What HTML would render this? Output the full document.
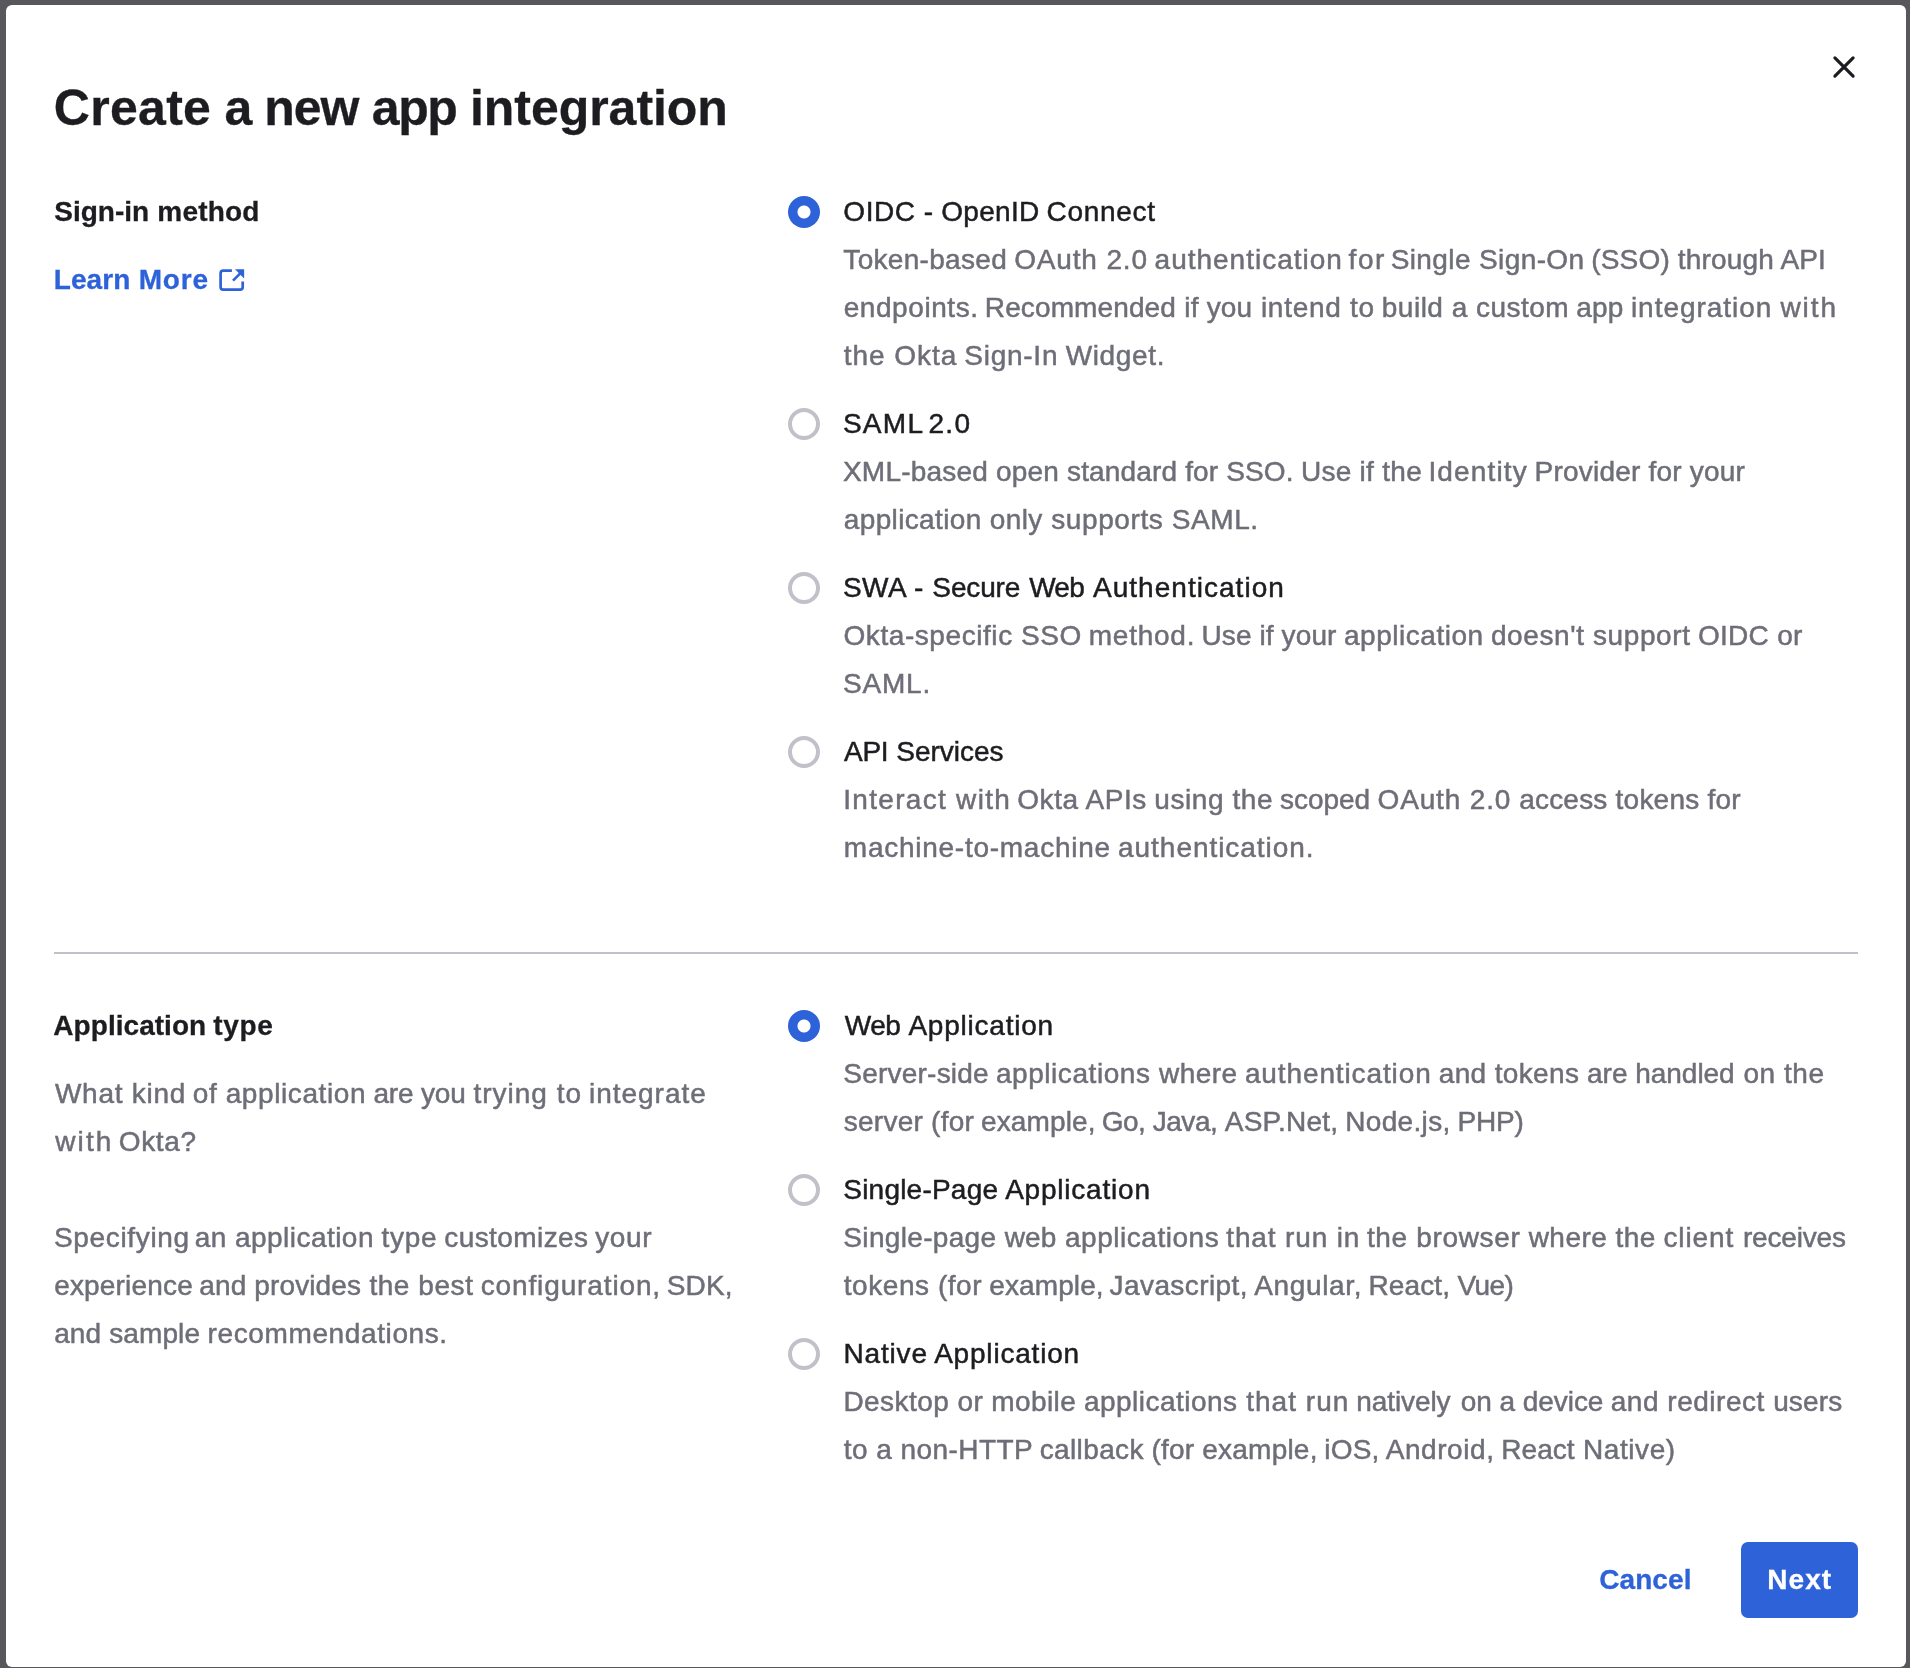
<!DOCTYPE html>
<html lang="en">
<head>
<meta charset="utf-8">
<title>Create a new app integration</title>
<style>
html,body{margin:0;padding:0;}
body{width:1910px;height:1668px;overflow:hidden;background:#58585c;font-family:"Liberation Sans",sans-serif;position:relative;}
.dlg{position:absolute;left:6px;top:5px;width:1900px;height:1662px;background:#fff;border-radius:6px;}
.txt{position:absolute;left:0;top:0;width:1910px;height:1668px;will-change:transform;}
.t{position:absolute;white-space:pre;line-height:48px;height:48px;font-size:28px;margin:0;font-weight:normal;-webkit-text-stroke:0.5px currentColor;}
.b{font-weight:bold;-webkit-text-stroke:0.3px currentColor;}
.d{color:#1d1d21;}
.g{color:#6e6e78;}
.l{color:#2e62d9;}
.w{color:#fff;}
.rad{position:absolute;left:788px;width:32px;height:32px;border-radius:50%;box-sizing:border-box;border:4px solid #c1c1c9;background:#fff;}
.rad.on{border:none;background:radial-gradient(circle at 50% 50%,#fff 0,#fff 6.0px,#2e62d9 7.0px,#2e62d9 100%);}
.hr{position:absolute;left:54px;top:952px;width:1804px;height:2px;background:#c1c1c9;}
.btn{position:absolute;left:1741px;top:1542px;width:117px;height:76px;border-radius:7px;background:#2e62d9;}
svg{position:absolute;overflow:visible;}
</style>
</head>
<body>
<div class="dlg"></div>
<div class="hr"></div>
<div class="btn"></div>
<div class="rad on" style="top:196px"></div>
<div class="rad" style="top:408px"></div>
<div class="rad" style="top:572px"></div>
<div class="rad" style="top:736px"></div>
<div class="rad on" style="top:1010px"></div>
<div class="rad" style="top:1174px"></div>
<div class="rad" style="top:1338px"></div>
<svg style="left:1824px;top:47px" width="40" height="40" viewBox="0 0 40 40"><path d="M10.9 10.9 L29.1 29.1 M29.1 10.9 L10.9 29.1" stroke="#1d1d21" stroke-width="3.2" stroke-linecap="round" fill="none"/></svg>
<svg style="left:210px;top:260px" width="46" height="40" viewBox="0 0 46 40"><path d="M21.9 10.65 H13.2 a2.6 2.6 0 0 0 -2.6 2.6 V27 a2.6 2.6 0 0 0 2.6 2.6 H30.1 a2.6 2.6 0 0 0 2.6 -2.6 V21.4" stroke="#2e62d9" stroke-width="2.7" fill="none"/><path d="M23 20.6 L31 12.6" stroke="#2e62d9" stroke-width="2.7" fill="none"/><path d="M25 9.3 H34.1 V18.4 Z" fill="#2e62d9"/></svg>
<div class="txt">
<h1 class="t b d" style="left:53.86px;top:76.17px;letter-spacing:0.273px;font-size:50px;line-height:64px;height:64px;">Create</h1>
<h1 class="t b d" style="left:224.58px;top:76.17px;letter-spacing:-1.016px;font-size:50px;line-height:64px;height:64px;">a new</h1>
<h1 class="t b d" style="left:371.87px;top:76.17px;letter-spacing:-1.457px;font-size:50px;line-height:64px;height:64px;">app</h1>
<h1 class="t b d" style="left:469.91px;top:76.17px;letter-spacing:-0.032px;font-size:50px;line-height:64px;height:64px;">integration</h1>
<div class="t b d" style="left:54.24px;top:187.80px;letter-spacing:0.016px;">Sign-in</div>
<div class="t b d" style="left:157.35px;top:187.80px;letter-spacing:0.175px;">method</div>
<div class="t b l" style="left:53.81px;top:255.80px;letter-spacing:0.068px;">Learn</div>
<div class="t b l" style="left:138.66px;top:255.80px;letter-spacing:0.835px;">More</div>
<div class="t d" style="left:843.35px;top:187.80px;letter-spacing:0.525px;">OIDC -</div>
<div class="t d" style="left:941.20px;top:187.80px;letter-spacing:0.308px;">OpenID</div>
<div class="t d" style="left:1046.55px;top:187.80px;letter-spacing:0.704px;">Connect</div>
<div class="t g" style="left:843.37px;top:235.80px;letter-spacing:0.302px;">Token-based</div>
<div class="t g" style="left:1014.20px;top:235.80px;letter-spacing:0.842px;">OAuth 2.0</div>
<div class="t g" style="left:1154.59px;top:235.80px;letter-spacing:0.991px;">authentication</div>
<div class="t g" style="left:1348.59px;top:235.80px;letter-spacing:1.518px;">for</div>
<div class="t g" style="left:1390.70px;top:235.80px;letter-spacing:0.391px;">Single Sign-On</div>
<div class="t g" style="left:1591.29px;top:235.80px;letter-spacing:0.170px;">(SSO) through API</div>
<div class="t g" style="left:843.70px;top:283.80px;letter-spacing:0.567px;">endpoints.</div>
<div class="t g" style="left:984.83px;top:283.80px;letter-spacing:0.113px;">Recommended</div>
<div class="t g" style="left:1184.36px;top:283.80px;letter-spacing:0.179px;">if you</div>
<div class="t g" style="left:1260.93px;top:283.80px;letter-spacing:0.712px;">intend to</div>
<div class="t g" style="left:1381.82px;top:283.80px;letter-spacing:0.486px;">build a custom</div>
<div class="t g" style="left:1576.13px;top:283.80px;letter-spacing:0.187px;">app</div>
<div class="t g" style="left:1630.93px;top:283.80px;letter-spacing:0.974px;">integration</div>
<div class="t g" style="left:1780.50px;top:283.80px;letter-spacing:1.897px;">with</div>
<div class="t g" style="left:843.80px;top:331.80px;letter-spacing:0.941px;">the Okta</div>
<div class="t g" style="left:964.36px;top:331.80px;letter-spacing:0.730px;">Sign-In</div>
<div class="t g" style="left:1065.65px;top:331.80px;letter-spacing:0.663px;">Widget.</div>
<div class="t d" style="left:842.91px;top:399.80px;letter-spacing:1.289px;">SAML</div>
<div class="t d" style="left:928.38px;top:399.80px;letter-spacing:1.329px;">2.0</div>
<div class="t g" style="left:843.00px;top:447.80px;letter-spacing:0.198px;">XML-based open</div>
<div class="t g" style="left:1067.04px;top:447.80px;letter-spacing:0.151px;">standard for SSO.</div>
<div class="t g" style="left:1300.91px;top:447.80px;letter-spacing:0.281px;">Use if the</div>
<div class="t g" style="left:1428.45px;top:447.80px;letter-spacing:1.155px;">Identity</div>
<div class="t g" style="left:1534.53px;top:447.80px;letter-spacing:0.216px;">Provider for your</div>
<div class="t g" style="left:843.75px;top:495.80px;letter-spacing:0.369px;">application only</div>
<div class="t g" style="left:1051.28px;top:495.80px;letter-spacing:0.591px;">supports SAML.</div>
<div class="t d" style="left:842.91px;top:563.80px;letter-spacing:0.520px;">SWA -</div>
<div class="t d" style="left:932.36px;top:563.80px;letter-spacing:-0.148px;">Secure</div>
<div class="t d" style="left:1029.13px;top:563.80px;letter-spacing:-0.683px;">Web</div>
<div class="t d" style="left:1093.01px;top:563.80px;letter-spacing:1.026px;">Authentication</div>
<div class="t g" style="left:843.53px;top:611.80px;letter-spacing:0.566px;">Okta-specific SSO</div>
<div class="t g" style="left:1088.76px;top:611.80px;letter-spacing:0.748px;">method.</div>
<div class="t g" style="left:1201.44px;top:611.80px;letter-spacing:0.114px;">Use if your</div>
<div class="t g" style="left:1344.00px;top:611.80px;letter-spacing:0.524px;">application</div>
<div class="t g" style="left:1490.94px;top:611.80px;letter-spacing:0.604px;">doesn&#39;t support</div>
<div class="t g" style="left:1697.89px;top:611.80px;letter-spacing:0.305px;">OIDC or</div>
<div class="t g" style="left:842.91px;top:659.80px;letter-spacing:0.832px;">SAML.</div>
<div class="t d" style="left:843.96px;top:727.80px;letter-spacing:-0.240px;">API</div>
<div class="t d" style="left:896.28px;top:727.80px;letter-spacing:-0.015px;">Services</div>
<div class="t g" style="left:843.22px;top:775.80px;letter-spacing:1.304px;">Interact with</div>
<div class="t g" style="left:1017.27px;top:775.80px;letter-spacing:0.571px;">Okta APIs</div>
<div class="t g" style="left:1154.30px;top:775.80px;letter-spacing:0.572px;">using the</div>
<div class="t g" style="left:1280.04px;top:775.80px;letter-spacing:-0.031px;">scoped</div>
<div class="t g" style="left:1377.53px;top:775.80px;letter-spacing:0.855px;">OAuth 2.0</div>
<div class="t g" style="left:1519.13px;top:775.80px;letter-spacing:0.220px;">access tokens for</div>
<div class="t g" style="left:843.86px;top:823.80px;letter-spacing:0.735px;">machine-to-machine</div>
<div class="t g" style="left:1118.07px;top:823.80px;letter-spacing:0.956px;">authentication.</div>
<div class="t b d" style="left:53.35px;top:1001.80px;letter-spacing:0.040px;">Application</div>
<div class="t b d" style="left:213.34px;top:1001.80px;letter-spacing:0.613px;">type</div>
<div class="t g" style="left:54.91px;top:1069.80px;letter-spacing:0.745px;">What kind</div>
<div class="t g" style="left:192.71px;top:1069.80px;letter-spacing:0.602px;">of application</div>
<div class="t g" style="left:373.43px;top:1069.80px;letter-spacing:-0.181px;">are you</div>
<div class="t g" style="left:473.38px;top:1069.80px;letter-spacing:1.006px;">trying to</div>
<div class="t g" style="left:588.93px;top:1069.80px;letter-spacing:0.988px;">integrate</div>
<div class="t g" style="left:55.26px;top:1117.80px;letter-spacing:2.125px;">with</div>
<div class="t g" style="left:118.72px;top:1117.80px;letter-spacing:0.651px;">Okta?</div>
<div class="t g" style="left:53.91px;top:1213.80px;letter-spacing:0.678px;">Specifying</div>
<div class="t g" style="left:194.75px;top:1213.80px;letter-spacing:0.454px;">an application</div>
<div class="t g" style="left:381.51px;top:1213.80px;letter-spacing:0.749px;">type</div>
<div class="t g" style="left:444.29px;top:1213.80px;letter-spacing:0.411px;">customizes</div>
<div class="t g" style="left:595.14px;top:1213.80px;letter-spacing:0.634px;">your</div>
<div class="t g" style="left:54.13px;top:1261.80px;letter-spacing:0.179px;">experience</div>
<div class="t g" style="left:199.32px;top:1261.80px;letter-spacing:0.125px;">and provides</div>
<div class="t g" style="left:369.38px;top:1261.80px;letter-spacing:0.566px;">the best</div>
<div class="t g" style="left:480.69px;top:1261.80px;letter-spacing:0.873px;">configuration,</div>
<div class="t g" style="left:666.70px;top:1261.80px;letter-spacing:0.202px;">SDK,</div>
<div class="t g" style="left:54.13px;top:1309.80px;letter-spacing:0.126px;">and sample</div>
<div class="t g" style="left:207.60px;top:1309.80px;letter-spacing:0.615px;">recommendations.</div>
<div class="t d" style="left:844.69px;top:1001.80px;letter-spacing:-0.463px;">Web</div>
<div class="t d" style="left:908.43px;top:1001.80px;letter-spacing:0.770px;">Application</div>
<div class="t g" style="left:843.36px;top:1049.80px;letter-spacing:0.215px;">Server-side</div>
<div class="t g" style="left:995.94px;top:1049.80px;letter-spacing:0.554px;">applications</div>
<div class="t g" style="left:1159.04px;top:1049.80px;letter-spacing:0.433px;">where</div>
<div class="t g" style="left:1244.91px;top:1049.80px;letter-spacing:0.883px;">authentication</div>
<div class="t g" style="left:1438.75px;top:1049.80px;letter-spacing:0.354px;">and tokens</div>
<div class="t g" style="left:1587.07px;top:1049.80px;letter-spacing:-0.027px;">are handled</div>
<div class="t g" style="left:1743.40px;top:1049.80px;letter-spacing:0.554px;">on the</div>
<div class="t g" style="left:843.78px;top:1097.80px;letter-spacing:0.251px;">server (for</div>
<div class="t g" style="left:981.06px;top:1097.80px;letter-spacing:0.109px;">example,</div>
<div class="t g" style="left:1101.64px;top:1097.80px;letter-spacing:-0.456px;">Go, Java,</div>
<div class="t g" style="left:1224.80px;top:1097.80px;letter-spacing:0.238px;">ASP.Net,</div>
<div class="t g" style="left:1345.29px;top:1097.80px;letter-spacing:0.324px;">Node.js,</div>
<div class="t g" style="left:1457.53px;top:1097.80px;letter-spacing:-0.172px;">PHP)</div>
<div class="t d" style="left:843.28px;top:1165.80px;letter-spacing:0.219px;">Single-Page</div>
<div class="t d" style="left:1005.14px;top:1165.80px;letter-spacing:0.785px;">Application</div>
<div class="t g" style="left:843.36px;top:1213.80px;letter-spacing:0.323px;">Single-page</div>
<div class="t g" style="left:1004.74px;top:1213.80px;letter-spacing:0.112px;">web</div>
<div class="t g" style="left:1065.00px;top:1213.80px;letter-spacing:0.527px;">applications</div>
<div class="t g" style="left:1226.30px;top:1213.80px;letter-spacing:0.860px;">that run in</div>
<div class="t g" style="left:1366.88px;top:1213.80px;letter-spacing:0.659px;">the browser</div>
<div class="t g" style="left:1528.70px;top:1213.80px;letter-spacing:0.453px;">where the</div>
<div class="t g" style="left:1663.39px;top:1213.80px;letter-spacing:0.930px;">client</div>
<div class="t g" style="left:1742.91px;top:1213.80px;letter-spacing:-0.175px;">receives</div>
<div class="t g" style="left:843.80px;top:1261.80px;letter-spacing:0.545px;">tokens (for</div>
<div class="t g" style="left:989.28px;top:1261.80px;letter-spacing:0.108px;">example,</div>
<div class="t g" style="left:1109.62px;top:1261.80px;letter-spacing:0.400px;">Javascript,</div>
<div class="t g" style="left:1254.22px;top:1261.80px;letter-spacing:0.651px;">Angular,</div>
<div class="t g" style="left:1368.42px;top:1261.80px;letter-spacing:0.127px;">React,</div>
<div class="t g" style="left:1457.47px;top:1261.80px;letter-spacing:-0.589px;">Vue)</div>
<div class="t d" style="left:843.38px;top:1329.80px;letter-spacing:0.855px;">Native</div>
<div class="t d" style="left:934.14px;top:1329.80px;letter-spacing:0.804px;">Application</div>
<div class="t g" style="left:843.38px;top:1377.80px;letter-spacing:0.445px;">Desktop or</div>
<div class="t g" style="left:991.35px;top:1377.80px;letter-spacing:0.394px;">mobile</div>
<div class="t g" style="left:1083.94px;top:1377.80px;letter-spacing:0.474px;">applications</div>
<div class="t g" style="left:1246.17px;top:1377.80px;letter-spacing:1.045px;">that run</div>
<div class="t g" style="left:1356.35px;top:1377.80px;letter-spacing:-0.114px;">natively</div>
<div class="t g" style="left:1460.71px;top:1377.80px;letter-spacing:-0.048px;">on a device</div>
<div class="t g" style="left:1610.75px;top:1377.80px;letter-spacing:0.514px;">and redirect</div>
<div class="t g" style="left:1773.17px;top:1377.80px;letter-spacing:0.136px;">users</div>
<div class="t g" style="left:843.80px;top:1425.80px;letter-spacing:0.437px;">to a non-HTTP</div>
<div class="t g" style="left:1039.68px;top:1425.80px;letter-spacing:0.377px;">callback</div>
<div class="t g" style="left:1151.42px;top:1425.80px;letter-spacing:0.219px;">(for example,</div>
<div class="t g" style="left:1324.32px;top:1425.80px;letter-spacing:0.164px;">iOS,</div>
<div class="t g" style="left:1385.68px;top:1425.80px;letter-spacing:0.574px;">Android,</div>
<div class="t g" style="left:1501.29px;top:1425.80px;letter-spacing:0.044px;">React</div>
<div class="t g" style="left:1583.00px;top:1425.80px;letter-spacing:0.573px;">Native)</div>
<div class="t b l" style="left:1599.20px;top:1555.80px;letter-spacing:0.092px;">Cancel</div>
<div class="t b w" style="left:1767.19px;top:1555.80px;letter-spacing:1.078px;">Next</div>
</div>
</body>
</html>
